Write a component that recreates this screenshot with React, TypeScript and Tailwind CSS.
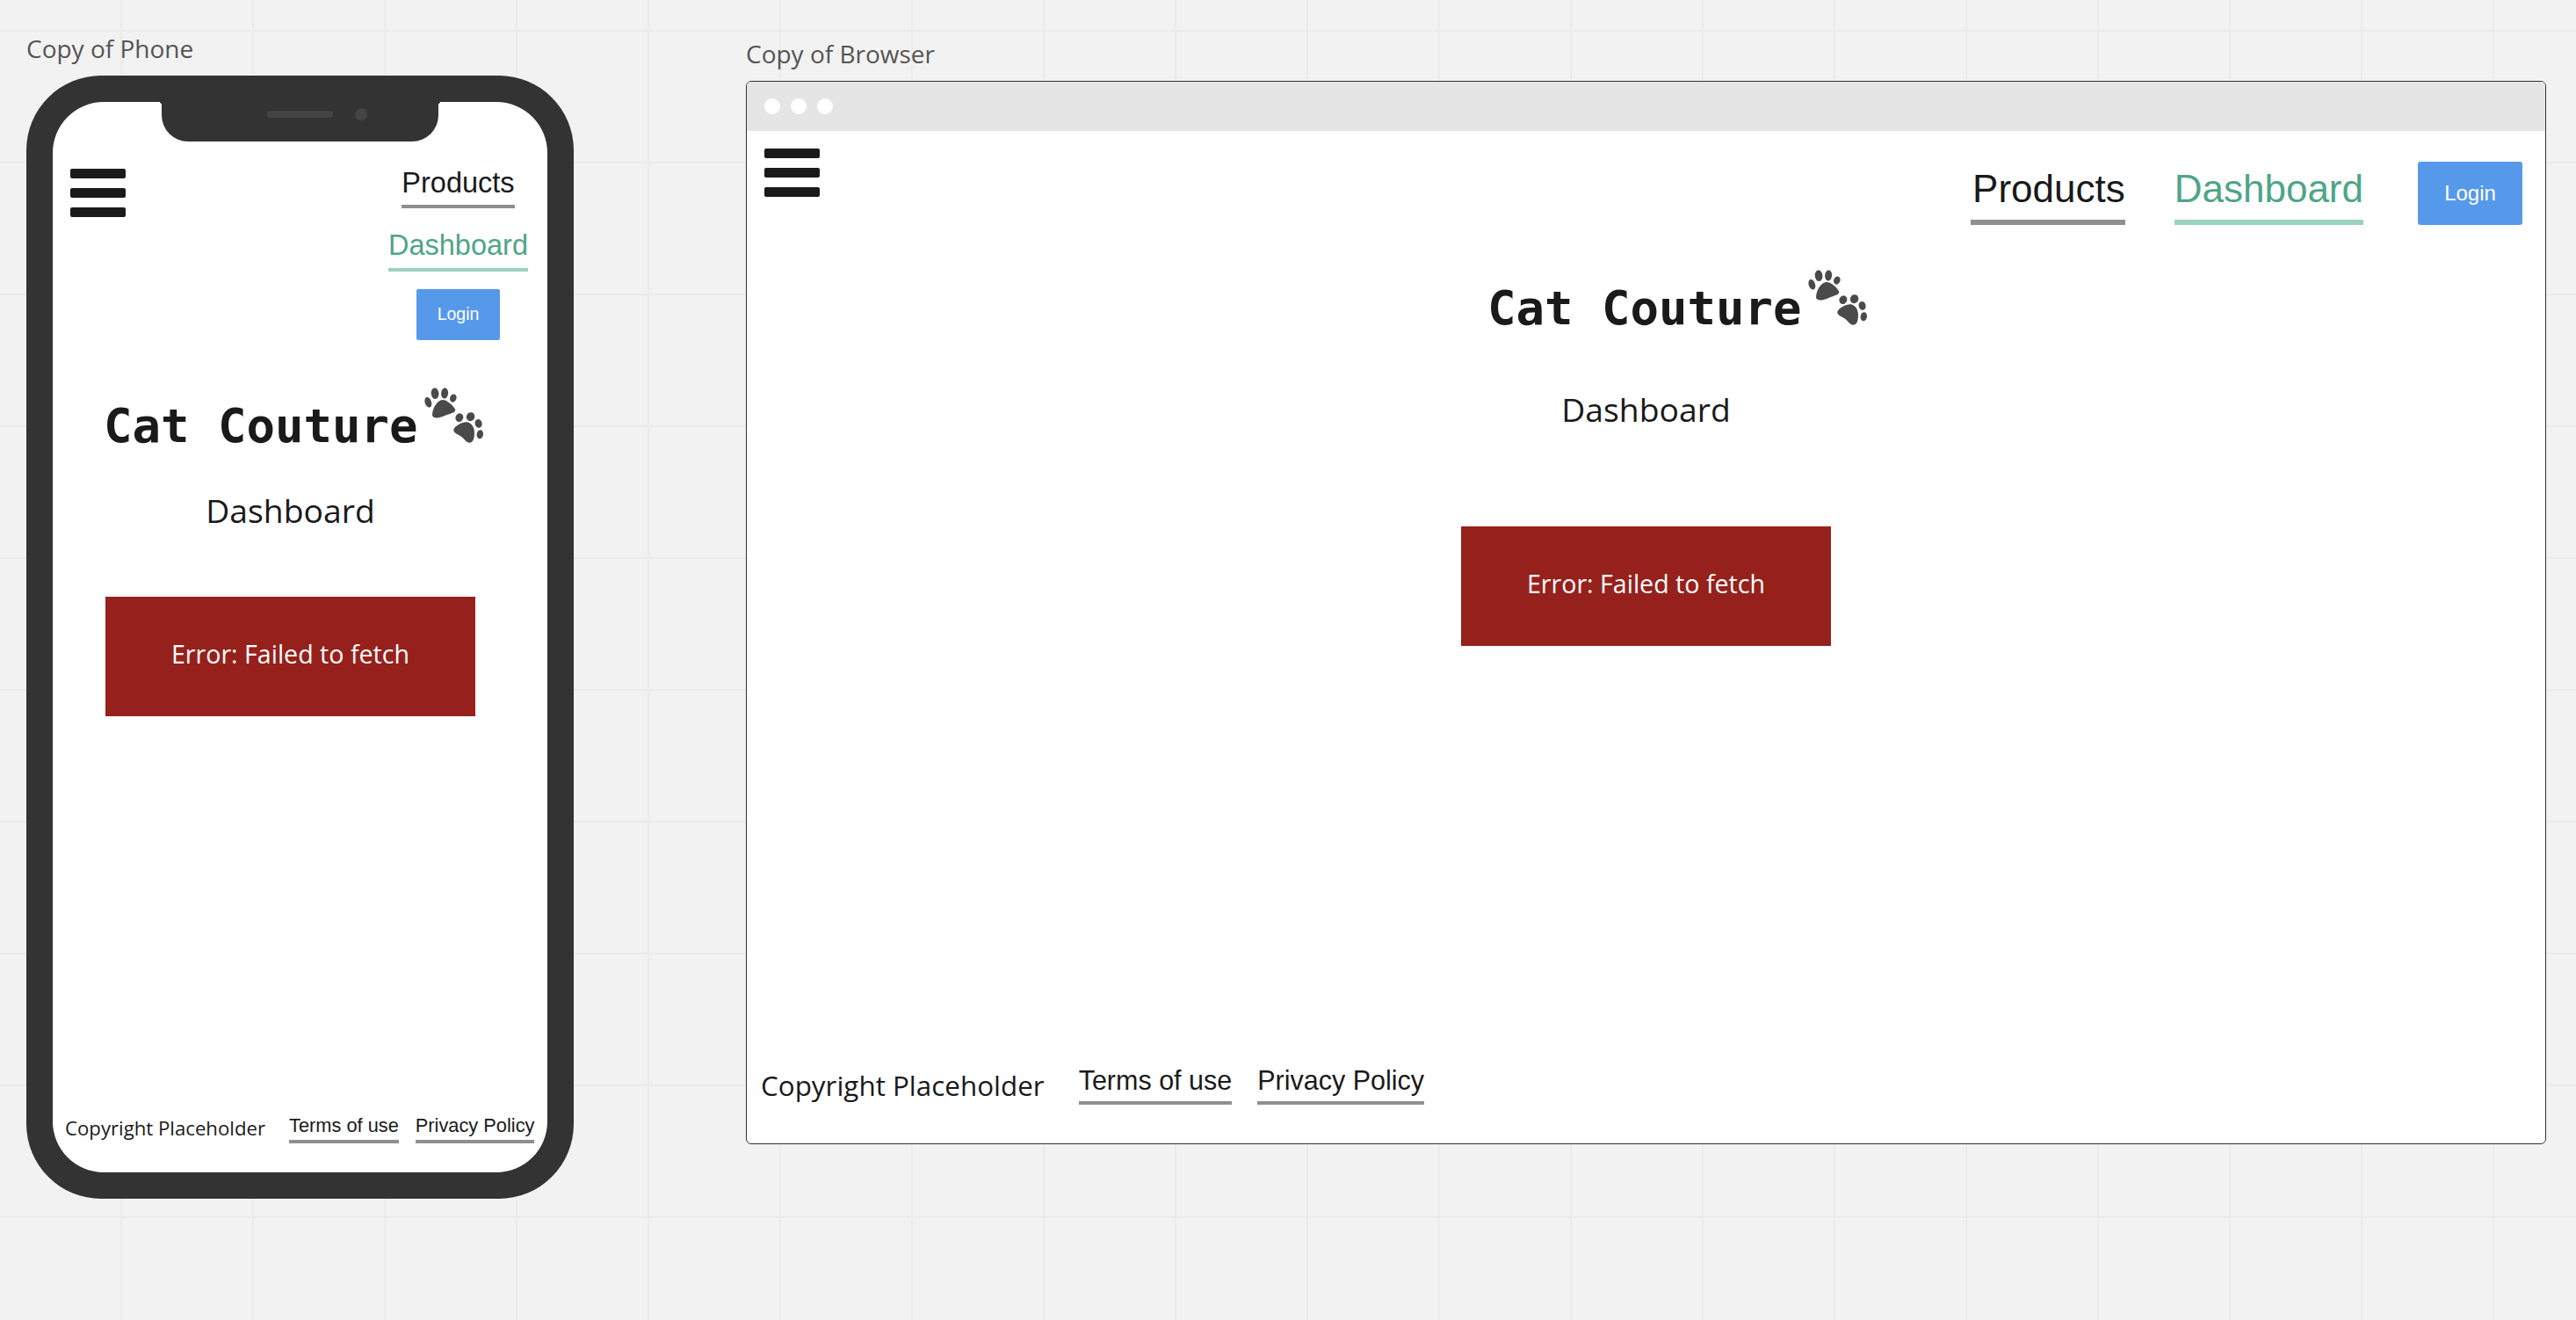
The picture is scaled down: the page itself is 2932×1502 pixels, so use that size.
const openSans = 'font-["Open_Sans",sans-serif]';
const arial = 'font-["Liberation_Sans",Arial,sans-serif]';

// two paw prints beside the logo text
function Paws({ className }: { className: string }) {
  return (
    <svg viewBox="75 50 215 200" fill="#4a4a4a" className={className}>
      <ellipse cx="94" cy="106" rx="11" ry="18" transform="rotate(-18 94 106)" />
      <ellipse cx="117" cy="76" rx="13" ry="19" transform="rotate(-5 117 76)" />
      <ellipse cx="150" cy="75" rx="12" ry="18" transform="rotate(5 150 75)" />
      <ellipse cx="179" cy="92" rx="11" ry="14" transform="rotate(20 179 92)" />
      <path d="M108 146C110 125 124 100 143 98C160 98 180 118 186 130C188 138 178 142 165 146C150 150 138 159 124 159C114 159 107 155 108 146Z" />
      <ellipse cx="200" cy="158" rx="13" ry="15" transform="rotate(25 200 158)" />
      <ellipse cx="238" cy="155" rx="14" ry="15" transform="rotate(25 238 155)" />
      <ellipse cx="265" cy="178" rx="12" ry="15" transform="rotate(-10 265 178)" />
      <ellipse cx="270" cy="215" rx="11" ry="15" transform="rotate(10 270 215)" />
      <path d="M181 197C185 186 210 172 226 173C243 176 253 195 251 214C250 232 246 243 234 243C222 243 216 228 203 220C190 213 178 208 181 197Z" />
    </svg>
  );
}

function Burger({ className }: { className?: string }) {
  return (
    <div className={`flex w-[63px] shrink-0 flex-col gap-[11px] ${className ?? ''}`}>
      <div className="h-[11px] rounded-[2px] bg-[#1a1a1a]" />
      <div className="h-[11px] rounded-[2px] bg-[#1a1a1a]" />
      <div className="h-[11px] rounded-[2px] bg-[#1a1a1a]" />
    </div>
  );
}

function Hero({ titleClass, headingClass, errorClass }: { titleClass: string; headingClass: string; errorClass: string }) {
  return (
    <div className="flex w-[421px] flex-col">
      <div className={`flex w-max items-end ${titleClass}`}>
        <h1 className='font-["DejaVu_Sans_Mono",monospace] text-[54px] leading-none font-bold whitespace-nowrap text-[#1a1a1a]'>
          Cat Couture
        </h1>
        <Paws className="mb-[6px] ml-[5px] h-[67px] w-[72px] shrink-0" />
      </div>
      <h2 className={`${openSans} text-center text-[37.3px] leading-none text-[#1a1a1a] ${headingClass}`}>Dashboard</h2>
      <div className={`${openSans} ${errorClass} flex h-[136px] items-center justify-center bg-[#96211c] pb-[6px] text-[28.6px] text-white`}>
        Error: Failed to fetch
      </div>
    </div>
  );
}

export default function App() {
  return (
    <div className="relative h-[1502px] w-[2932px] overflow-hidden bg-[#f2f2f2] bg-[linear-gradient(to_right,#ebebeb_2px,transparent_2px),linear-gradient(to_bottom,#ebebeb_2px,transparent_2px)] bg-[size:150px_150px] bg-[position:137px_34px]">
      <div className={`${openSans} absolute top-[36px] left-[30px] text-[28px] leading-[38px] text-[#555555]`}>Copy of Phone</div>
      <div className={`${openSans} absolute top-[42px] left-[849px] text-[28px] leading-[38px] text-[#555555]`}>Copy of Browser</div>

      {/* phone frame */}
      <div className="absolute top-[86px] left-[30px] h-[1278px] w-[623px] rounded-[85px] bg-[#333333] p-[30px]">
        <div className="relative flex h-full flex-col rounded-[58px] bg-white">
          <div className="absolute top-0 left-[124px] flex h-[45px] w-[315px] items-start justify-center gap-[25px] rounded-b-[30px] bg-[#333333] pt-[7px] pl-[39px]">
            <div className="absolute top-0 -left-[4px] h-[4px] w-[4px] bg-[radial-gradient(circle_at_0_100%,transparent_4px,#333333_4px)]" />
            <div className="absolute top-0 -right-[4px] h-[4px] w-[4px] bg-[radial-gradient(circle_at_100%_100%,transparent_4px,#333333_4px)]" />
            <div className="mt-[3px] h-[8px] w-[75px] rounded-full bg-[#444444]" />
            <div className="h-[14px] w-[14px] rounded-full bg-[#444444]" />
          </div>

          <div className={`${arial} flex items-start justify-between pt-[76px] pr-[22px] pl-[20px]`}>
            <Burger />
            <div className="flex flex-col items-center">
              <a className="border-b-4 border-[#8f8f8f] pb-[8px] text-[32.5px] leading-none text-[#1a1a1a]">Products</a>
              <a className="mt-[26px] border-b-4 border-[#9dd2c0] pb-[10px] text-[32.5px] leading-none text-[#4fa587]">Dashboard</a>
              <button className="mt-[20px] h-[58px] w-[95px] rounded-[2px] bg-[#5699ea] text-[19.5px] text-white">Login</button>
            </div>
          </div>

          <div className="flex-1 pt-[52px] pl-[60px]">
            <Hero titleClass="-ml-[2px]" headingClass="mt-[50px]" errorClass="mt-[80px]" />
          </div>

          <div className="flex items-end pr-[14px] pb-[33px] pl-[14px]">
            <span className={`${openSans} mb-[1px] text-[22.2px] leading-[32px] whitespace-nowrap text-[#1a1a1a]`}>Copyright Placeholder</span>
            <a className={`${arial} ml-[27px] border-b-[4px] border-[#8f8f8f] pb-[5px] text-[21.8px] leading-none whitespace-nowrap text-[#1a1a1a]`}>Terms of use</a>
            <a className={`${arial} ml-[19px] border-b-[4px] border-[#8f8f8f] pb-[5px] text-[21.8px] leading-none whitespace-nowrap text-[#1a1a1a]`}>Privacy Policy</a>
          </div>
        </div>
      </div>

      {/* browser frame */}
      <div className="absolute top-[92px] left-[849px] flex h-[1210px] w-[2049px] flex-col overflow-hidden rounded-[6px] border border-[#333333] bg-white">
        <div className="flex h-[56px] shrink-0 items-start gap-[12px] bg-[#e5e5e5] pt-[19px] pl-[20px]">
          <div className="h-[18px] w-[18px] rounded-full bg-white" />
          <div className="h-[18px] w-[18px] rounded-full bg-white" />
          <div className="h-[18px] w-[18px] rounded-full bg-white" />
        </div>

        <div className={`${arial} flex items-start pt-[20px] pr-[26px] pl-[20px]`}>
          <Burger />
          <div className="ml-auto flex items-start">
            <a className="mt-[15px] flex h-[72px] flex-col justify-start border-b-[6px] border-[#8f8f8f] pl-[2px] text-[44px] leading-[62px] text-[#1a1a1a]">Products</a>
            <a className="mt-[15px] ml-[56px] flex h-[72px] flex-col justify-start border-b-[6px] border-[#9dd2c0] text-[44px] leading-[62px] text-[#4fa587]">Dashboard</a>
            <button className="mt-[15px] ml-[62px] h-[72px] w-[119px] rounded-[3px] bg-[#5699ea] text-[24px] text-white">Login</button>
          </div>
        </div>

        <div className="flex flex-1 justify-center pt-[49px]">
          <Hero titleClass="ml-[30px]" headingClass="mt-[69px]" errorClass="mt-[115px]" />
        </div>

        <div className="flex items-end pb-[44px] pl-[16px]">
          <span className={`${openSans} text-[31.4px] leading-[44px] whitespace-nowrap text-[#1a1a1a]`}>Copyright Placeholder</span>
          <a className={`${arial} ml-[39px] border-b-[4px] border-[#8f8f8f] pb-[9px] text-[30.5px] leading-none whitespace-nowrap text-[#1a1a1a]`}>Terms of use</a>
          <a className={`${arial} ml-[29px] border-b-[4px] border-[#8f8f8f] pb-[9px] text-[30.5px] leading-none whitespace-nowrap text-[#1a1a1a]`}>Privacy Policy</a>
        </div>
      </div>
    </div>
  );
}
